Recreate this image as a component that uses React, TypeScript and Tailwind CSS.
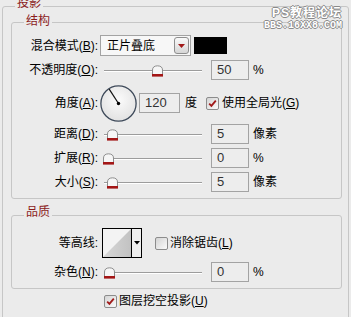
import React from "react";

const RED = "#8b1c1c";

function U({ children }: { children: React.ReactNode }) {
  return <span className="underline underline-offset-[1px]">{children}</span>;
}

function Label({ children }: { children: React.ReactNode }) {
  return <div className="w-[86px] shrink-0 text-right whitespace-nowrap">{children}</div>;
}

function Checkbox({ checked }: { checked: boolean }) {
  return (
    <span className="w-[13px] h-[13px] shrink-0 border border-[#8c8c8c] rounded-[2px] bg-linear-to-br from-[#d4d4d4] to-[#fbfbfb] flex items-center justify-center">
      {checked && (
        <svg width="9" height="9" viewBox="0 0 9 9">
          <path d="M1.2 4.6 L3.4 6.8 L7.8 1.6" stroke="#a11a1a" strokeWidth="1.8" fill="none" />
        </svg>
      )}
    </span>
  );
}

function Thumb() {
  return (
    <svg width="11" height="12" viewBox="0 0 11 12">
      <path d="M0.5 9.5 V5 Q0.5 1 5.5 0.8 Q10.5 1 10.5 5 V9.5 Z" fill="#f6f6f6" stroke="#8d8d8d" />
      <rect x="0" y="9" width="11" height="2.6" fill="#a31616" />
    </svg>
  );
}

function Slider({ pos }: { pos: number }) {
  return (
    <div className="relative w-[98px] h-[20px] ml-[6px] shrink-0">
      <div className="absolute left-0 right-0 top-[10px] h-[2px] border-t border-[#9c9c9c] bg-white" />
      <div className="absolute top-[5px]" style={{ left: pos }}>
        <Thumb />
      </div>
    </div>
  );
}

function Field({ value, className = "" }: { value: string; className?: string }) {
  return (
    <div
      className={`h-[20px] border border-[#a3a3a3] bg-[#ededed] flex items-center pl-[5px] text-[#333] text-[13px] shrink-0 ${className}`}
    >
      {value}
    </div>
  );
}

function SliderRow({
  label,
  pos,
  value,
  unit,
  className = "",
}: {
  label: React.ReactNode;
  pos: number;
  value: string;
  unit: string;
  className?: string;
}) {
  return (
    <div className={`flex items-center h-[20px] ${className}`}>
      <Label>{label}</Label>
      <Slider pos={pos} />
      <Field value={value} className="w-[38px] ml-[9px]" />
      <span className="ml-[4px]">{unit}</span>
    </div>
  );
}

function Group({
  title,
  legendTop,
  className = "",
  children,
}: {
  title: string;
  legendTop: string;
  className?: string;
  children: React.ReactNode;
}) {
  return (
    <div className={`relative border border-[#c6c6c6] rounded-[3px] ${className}`}>
      <div className={`absolute left-[12px] ${legendTop} px-[2px] bg-[#ebebeb] text-[${RED}] leading-[12px] text-[#8b1c1c]`}>
        {title}
      </div>
      {children}
    </div>
  );
}

function Dial() {
  return (
    <svg width="37" height="37" viewBox="0 0 37 37" className="shrink-0 ml-[2px]">
      <defs>
        <radialGradient id="dg" cx="50%" cy="40%" r="60%">
          <stop offset="0%" stopColor="#fbfbfb" />
          <stop offset="100%" stopColor="#e2e2e2" />
        </radialGradient>
      </defs>
      <circle cx="18.5" cy="18.5" r="17.6" fill="url(#dg)" stroke="#3e4a5a" strokeWidth="1.3" />
      <line x1="18.5" y1="18.5" x2="9.2" y2="4.2" stroke="#111" strokeWidth="1.2" />
      <circle cx="18.5" cy="18.5" r="1.7" fill="#000" />
    </svg>
  );
}

function Contour() {
  return (
    <div className="ml-[4px] w-[40px] h-[30px] border border-black flex shrink-0">
      <svg width="28" height="28" viewBox="0 0 28 28" className="bg-[#f3f3f3]">
        <defs>
          <linearGradient id="cg" x1="0" y1="0" x2="1" y2="0">
            <stop offset="0%" stopColor="#d8d8d8" />
            <stop offset="100%" stopColor="#c2c2c2" />
          </linearGradient>
        </defs>
        <path d="M0 28 L28 0 L28 28 Z" fill="url(#cg)" />
      </svg>
      <div className="flex-1 border-l border-black bg-[#eeeeee] flex items-center justify-center">
        <svg width="6" height="4" viewBox="0 0 6 4">
          <path d="M0 0 H6 L3 3.5 Z" fill="#000" />
        </svg>
      </div>
    </div>
  );
}

export default function App() {
  return (
    <div className="w-[351px] h-[317px] bg-[#ebebeb] overflow-hidden relative pt-[6px] px-[2px] font-['Liberation_Sans','Noto_Sans_CJK_SC',sans-serif] text-[12px] text-black">
      <div className="relative border border-[#c6c6c6] rounded-[3px] h-[330px] pl-[8px] pr-[6px] pt-[15px]">
        <div className="absolute left-[12px] top-[-10px] px-[2px] bg-[#ebebeb] leading-[12px] text-[#8b1c1c]">
          投影
        </div>

        <Group title="结构" legendTop="top-[-8px]" className="pt-[12px] pb-[6px]">
          <div className="flex items-center h-[21px]">
            <Label>
              混合模式(<U>B</U>):
            </Label>
            <div className="ml-[2px] w-[91px] h-[21px] border border-[#a3a3a3] bg-[#f7f7f7] flex items-center justify-between pl-[6px] pr-[1px]">
              <span>正片叠底</span>
              <span className="w-[15px] h-[17px] border border-[#8e8e8e] rounded-[3px] bg-linear-to-b from-[#fafafa] to-[#d6d6d6] flex items-center justify-center">
                <svg width="7" height="4" viewBox="0 0 7 4">
                  <path d="M0 0 H7 L3.5 4 Z" fill="#a11a1a" />
                </svg>
              </span>
            </div>
            <div className="ml-[3px] w-[33px] h-[17px] bg-black" />
          </div>

          <SliderRow
            className="mt-[4px]"
            label={
              <>
                不透明度(<U>O</U>):
              </>
            }
            pos={48}
            value="50"
            unit="%"
          />

          <div className="flex items-center h-[40px] mt-[3px]">
            <Label>
              角度(<U>A</U>):
            </Label>
            <Dial />
            <Field value="120" className="w-[41px] ml-[2px]" />
            <span className="ml-[5px]">度</span>
            <span className="ml-[9px]">
              <Checkbox checked />
            </span>
            <span className="ml-[3px]">
              使用全局光(<U>G</U>)
            </span>
          </div>

          <SliderRow
            className="mt-[1px]"
            label={
              <>
                距离(<U>D</U>):
              </>
            }
            pos={3}
            value="5"
            unit="像素"
          />
          <SliderRow
            className="mt-[4px]"
            label={
              <>
                扩展(<U>R</U>):
              </>
            }
            pos={-1}
            value="0"
            unit="%"
          />
          <SliderRow
            className="mt-[4px]"
            label={
              <>
                大小(<U>S</U>):
              </>
            }
            pos={3}
            value="5"
            unit="像素"
          />
        </Group>

        <Group title="品质" legendTop="top-[-10px]" className="mt-[16px] pt-[12px] pb-[6px]">
          <div className="flex items-center h-[30px]">
            <Label>等高线:</Label>
            <Contour />
            <span className="ml-[13px]">
              <Checkbox checked={false} />
            </span>
            <span className="ml-[2px]">
              消除锯齿(<U>L</U>)
            </span>
          </div>
          <SliderRow
            className="mt-[4px]"
            label={
              <>
                杂色(<U>N</U>):
              </>
            }
            pos={0}
            value="0"
            unit="%"
          />
        </Group>

        <div className="flex items-center h-[18px] mt-[3px] ml-[93px]">
          <Checkbox checked />
          <span className="ml-[2px]">
            图层挖空投影(<U>U</U>)
          </span>
        </div>
      </div>

      <div className="absolute right-[9px] top-[7px] flex flex-col items-end text-white font-bold leading-none [text-shadow:1px_0_#8a8a8a,-1px_0_#8a8a8a,0_1px_#8a8a8a,0_-1px_#8a8a8a]">
        <span className="text-[12px] tracking-[1px]">PS教程论坛</span>
        <span className="mt-[2px] text-[10px] font-['Liberation_Mono',monospace]">BBS.16XX8.COM</span>
      </div>
    </div>
  );
}
